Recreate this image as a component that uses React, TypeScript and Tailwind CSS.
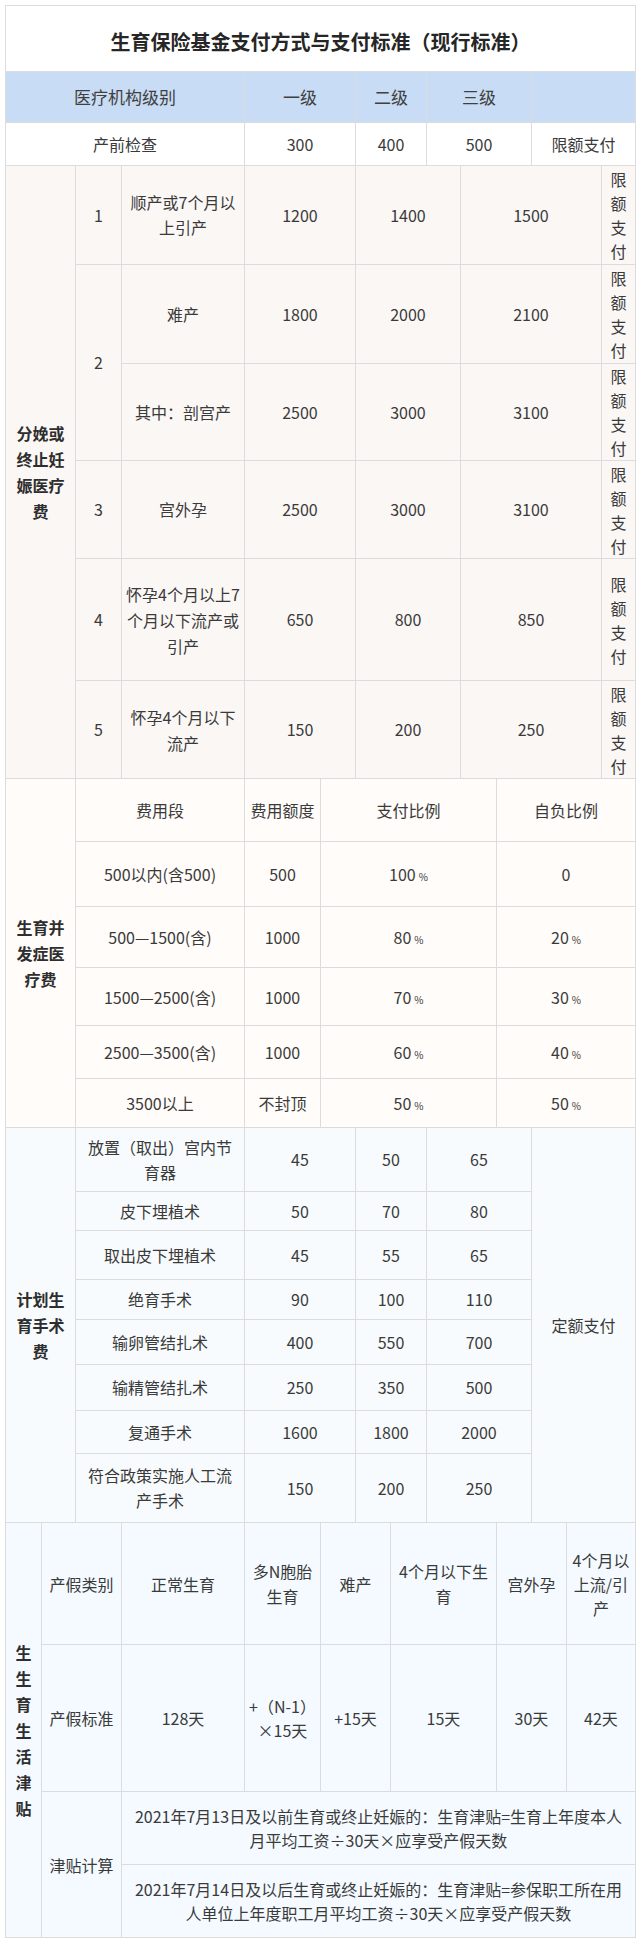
import React from "react";

const BD = "border-r border-b border-[#dcdcdc]";

function C({
  children,
  className = "",
}: {
  children?: React.ReactNode;
  className?: string;
}) {
  return (
    <div
      className={`flex items-center justify-center text-center ${BD} ${className}`}
    >
      {children}
    </div>
  );
}

function Lines({ lines, className = "" }: { lines: string[]; className?: string }) {
  return (
    <div className={className}>
      {lines.map((l, i) => (
        <div key={i} className="whitespace-nowrap">
          {l}
        </div>
      ))}
    </div>
  );
}

function Pct({ v }: { v: string }) {
  return (
    <span>
      {v}
      <span className="ml-[3px] text-[10px]">%</span>
    </span>
  );
}

function Vert({ text, bold = false }: { text: string; bold?: boolean }) {
  return (
    <div
      className={`flex flex-col items-center ${
        bold ? "font-bold leading-[26px] text-[#2e2e2e]" : "leading-[24px]"
      }`}
    >
      {text.split("").map((c, i) => (
        <span key={i}>{c}</span>
      ))}
    </div>
  );
}

export default function App() {
  return (
    <div className="min-h-[1946px] w-[640px] bg-white pl-[5px] pt-[5px] font-['Noto_Sans_CJK_SC','Noto_Sans',sans-serif] text-[16px] text-[#3a3a3a]">
      <div className="w-[631px] border-l border-t border-[#dcdcdc]">
        {/* Section 1 */}
        <div className="grid grid-cols-[239px_111px_71px_105px_104px] grid-rows-[66px_51px_43px]">
          <C className="col-span-5 bg-white pt-[6px] text-[20px] font-bold text-[#262626]">
            生育保险基金支付方式与支付标准（现行标准）
          </C>
          <C className="bg-[#c8ddf5] text-[17px] text-[#404040]">医疗机构级别</C>
          <C className="bg-[#c8ddf5] text-[17px] text-[#404040]">一级</C>
          <C className="bg-[#c8ddf5] text-[17px] text-[#404040]">二级</C>
          <C className="bg-[#c8ddf5] text-[17px] text-[#404040]">三级</C>
          <C className="bg-[#c8ddf5]"></C>
          <C className="bg-white">产前检查</C>
          <C className="bg-white">300</C>
          <C className="bg-white">400</C>
          <C className="bg-white">500</C>
          <C className="bg-white">限额支付</C>
        </div>

        {/* Section 2 */}
        <div className="grid grid-cols-[70px_46px_123px_111px_105px_141px_34px] grid-rows-[99px_99px_97px_98px_122px_98px] bg-[#faf7f5] leading-[25px]">
          <C className="row-span-6">
            <Lines
              className="text-[16px] font-bold leading-[26px] text-[#2e2e2e]"
              lines={["分娩或", "终止妊", "娠医疗", "费"]}
            />
          </C>
          <C>1</C>
          <C>
            <Lines lines={["顺产或7个月以", "上引产"]} />
          </C>
          <C>1200</C>
          <C>1400</C>
          <C>1500</C>
          <C>
            <Vert text="限额支付" />
          </C>
          <C className="row-span-2">2</C>
          <C>难产</C>
          <C>1800</C>
          <C>2000</C>
          <C>2100</C>
          <C>
            <Vert text="限额支付" />
          </C>
          <C>其中：剖宫产</C>
          <C>2500</C>
          <C>3000</C>
          <C>3100</C>
          <C>
            <Vert text="限额支付" />
          </C>
          <C>3</C>
          <C>宫外孕</C>
          <C>2500</C>
          <C>3000</C>
          <C>3100</C>
          <C>
            <Vert text="限额支付" />
          </C>
          <C>4</C>
          <C>
            <Lines lines={["怀孕4个月以上7", "个月以下流产或", "引产"]} className="leading-[26px]" />
          </C>
          <C>650</C>
          <C>800</C>
          <C>850</C>
          <C>
            <Vert text="限额支付" />
          </C>
          <C>5</C>
          <C>
            <Lines lines={["怀孕4个月以下", "流产"]} className="leading-[26px]" />
          </C>
          <C>150</C>
          <C>200</C>
          <C>250</C>
          <C>
            <Vert text="限额支付" />
          </C>
        </div>

        {/* Section 3 */}
        <div className="grid grid-cols-[70px_169px_76px_176px_139px] grid-rows-[63px_65px_61px_58px_53px_49px] bg-[#fffcf9]">
          <C className="row-span-6">
            <Lines
              className="font-bold leading-[26px] text-[#2e2e2e]"
              lines={["生育并", "发症医", "疗费"]}
            />
          </C>
          <C>费用段</C>
          <C>费用额度</C>
          <C>支付比例</C>
          <C>自负比例</C>
          <C>500以内(含500)</C>
          <C>500</C>
          <C>
            <Pct v="100" />
          </C>
          <C>0</C>
          <C>500—1500(含)</C>
          <C>1000</C>
          <C>
            <Pct v="80" />
          </C>
          <C>
            <Pct v="20" />
          </C>
          <C>1500—2500(含)</C>
          <C>1000</C>
          <C>
            <Pct v="70" />
          </C>
          <C>
            <Pct v="30" />
          </C>
          <C>2500—3500(含)</C>
          <C>1000</C>
          <C>
            <Pct v="60" />
          </C>
          <C>
            <Pct v="40" />
          </C>
          <C>3500以上</C>
          <C>不封顶</C>
          <C>
            <Pct v="50" />
          </C>
          <C>
            <Pct v="50" />
          </C>
        </div>

        {/* Section 4 */}
        <div className="grid grid-cols-[70px_169px_111px_71px_105px_104px] grid-rows-[64px_39px_49px_40px_45px_46px_43px_69px] bg-[#f8fbfd] leading-[25px]">
          <C className="row-span-8">
            <Lines
              className="font-bold leading-[26px] text-[#2e2e2e]"
              lines={["计划生", "育手术", "费"]}
            />
          </C>
          <C>
            <Lines lines={["放置（取出）宫内节", "育器"]} />
          </C>
          <C>45</C>
          <C>50</C>
          <C>65</C>
          <C className="row-span-8">定额支付</C>
          <C>皮下埋植术</C>
          <C>50</C>
          <C>70</C>
          <C>80</C>
          <C>取出皮下埋植术</C>
          <C>45</C>
          <C>55</C>
          <C>65</C>
          <C>绝育手术</C>
          <C>90</C>
          <C>100</C>
          <C>110</C>
          <C>输卵管结扎术</C>
          <C>400</C>
          <C>550</C>
          <C>700</C>
          <C>输精管结扎术</C>
          <C>250</C>
          <C>350</C>
          <C>500</C>
          <C>复通手术</C>
          <C>1600</C>
          <C>1800</C>
          <C>2000</C>
          <C>
            <Lines lines={["符合政策实施人工流", "产手术"]} />
          </C>
          <C>150</C>
          <C>200</C>
          <C>250</C>
        </div>

        {/* Section 5 */}
        <div className="grid grid-cols-[36px_80px_123px_76px_70px_106px_70px_69px] grid-rows-[122px_147px_73px_73px] bg-[#f4faff] leading-[24px]">
          <C className="row-span-4">
            <Vert text="生生育生活津贴" bold />
          </C>
          <C>产假类别</C>
          <C>正常生育</C>
          <C>
            <Lines lines={["多N胞胎", "生育"]} className="leading-[25px]" />
          </C>
          <C>难产</C>
          <C>
            <Lines lines={["4个月以下生", "育"]} className="leading-[25px]" />
          </C>
          <C>宫外孕</C>
          <C>
            <Lines lines={["4个月以", "上流/引", "产"]} />
          </C>
          <C>产假标准</C>
          <C>128天</C>
          <C>
            <Lines lines={["+（N-1）", "×15天"]} />
          </C>
          <C>+15天</C>
          <C>15天</C>
          <C>30天</C>
          <C>42天</C>
          <C className="row-span-2">津贴计算</C>
          <C className="col-span-6">
            <Lines
              lines={[
                "2021年7月13日及以前生育或终止妊娠的：生育津贴=生育上年度本人",
                "月平均工资÷30天×应享受产假天数",
              ]}
            />
          </C>
          <C className="col-span-6">
            <Lines
              lines={[
                "2021年7月14日及以后生育或终止妊娠的：生育津贴=参保职工所在用",
                "人单位上年度职工月平均工资÷30天×应享受产假天数",
              ]}
            />
          </C>
        </div>
      </div>
    </div>
  );
}
